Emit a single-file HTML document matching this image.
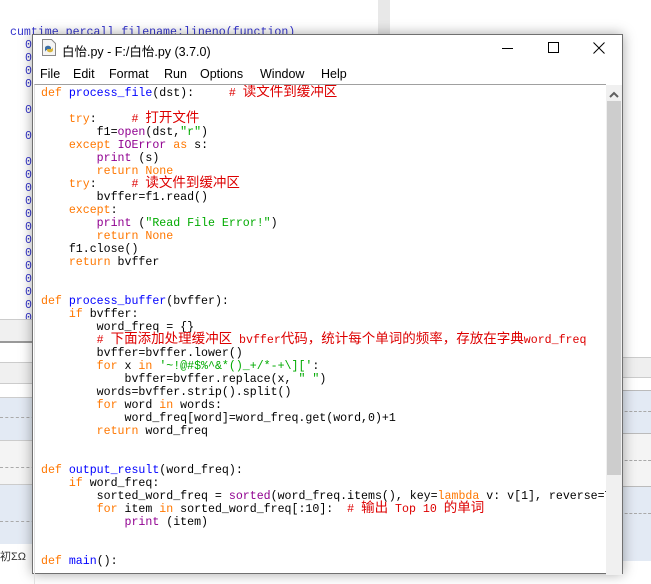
<!DOCTYPE html>
<html><head><meta charset="utf-8"><style>
*{margin:0;padding:0;box-sizing:border-box}
body{width:651px;height:561px;overflow:hidden;position:relative;background:#fff;font-family:"Liberation Sans","Noto Sans CJK SC",sans-serif}
.abs{position:absolute}
.bg0{font-family:"Liberation Mono",monospace;font-size:11.6px;color:#3333cc;line-height:13px}
#win{position:absolute;left:32px;top:34px;width:591px;height:540px;background:#fff;border:1px solid #707070;box-shadow:0 0 12px rgba(0,0,0,.35)}
.menu span{position:absolute;top:32px;font-size:12.5px;color:#000}
#txt{position:absolute;left:1px;top:49px;width:572px;height:500px;border-top:1px solid #a0a0a0;border-left:1px solid #e0e0e0;overflow:hidden}
pre{position:absolute;left:6px;top:2px;font-family:"Liberation Mono",monospace;font-size:11.6px;line-height:13px;color:#000;white-space:pre}
.c{font-size:13.5px;line-height:0;font-family:"Noto Sans CJK SC",sans-serif}
.k{color:#ff7700}.f{color:#0000ff}.r{color:#dd0000}.s{color:#00aa00}.b{color:#900090}
</style></head><body>
<div class="abs" style="left:378px;top:0;width:12px;height:34px;background:#e8e8e8"></div>
<div class="abs bg0" style="left:10px;top:26px">cumtime  percall filename:lineno(function)</div>
<div class="abs bg0" style="left:25px;top:39px">0.<br>0.<br>0.<br>0.<br><br>0.<br><br>0.<br><br>0.<br>0.<br>0.<br>0.<br>0.<br>0.<br>0.<br>0.<br>0.<br>0.<br>0.<br>0.<br>0.</div>
<div class="abs" style="left:0;top:319px;width:40px;height:1px;background:#ccc"></div>
<div class="abs" style="left:0;top:320px;width:40px;height:22px;background:#f0f0f0"></div>
<div class="abs" style="left:0;top:341px;width:40px;height:2px;background:#999"></div>
<div class="abs" style="left:0;top:362px;width:40px;height:22px;background:#f0f0f0;border-top:1px solid #ccc;border-bottom:1px solid #ccc"></div>
<div class="abs" style="left:0;top:397px;width:40px;height:43px;background:#e3eaf4;border-top:1px solid #ccc"></div>
<div class="abs" style="left:0;top:417px;width:40px;border-top:1px dashed #aaa"></div>
<div class="abs" style="left:0;top:440px;width:40px;height:44px;background:#f4f4f4;border-top:1px solid #ccc"></div>
<div class="abs" style="left:0;top:467px;width:40px;border-top:1px dashed #aaa"></div>
<div class="abs" style="left:0;top:484px;width:40px;height:60px;background:#e3eaf4;border-top:1px solid #ccc"></div>
<div class="abs" style="left:0;top:521px;width:40px;border-top:1px dashed #aaa"></div>
<div class="abs" style="left:0;top:548px;font-size:11px;color:#333">初ΣΩ</div>
<div class="abs" style="left:620px;top:357px;width:31px;height:21px;background:#efefef;border-top:1px solid #ccc;border-bottom:1px solid #ccc"></div>
<div class="abs" style="left:620px;top:390px;width:31px;height:43px;background:#e3eaf4;border-top:1px solid #bbb"></div>
<div class="abs" style="left:620px;top:411px;width:31px;border-top:1px dashed #aaa"></div>
<div class="abs" style="left:620px;top:433px;width:31px;height:53px;background:#f4f4f4;border-top:1px solid #bbb"></div>
<div class="abs" style="left:620px;top:460px;width:31px;border-top:1px dashed #aaa"></div>
<div class="abs" style="left:620px;top:486px;width:31px;height:75px;background:#e3eaf4;border-top:1px solid #bbb"></div>
<div class="abs" style="left:620px;top:513px;width:31px;border-top:1px dashed #aaa"></div>
<div id="win">
<svg class="abs" style="left:8px;top:4px" width="16" height="17" viewBox="0 0 16 17"><path d="M1.5 .5h9l4 4v12h-13z" fill="#f4f4f4" stroke="#888"/><path d="M4 9c0-3 6-3 6 0v2H6c-1 0-2 1-2 2z" fill="#3b6ea5"/><path d="M12 11c0 3-6 3-6 0v-1h4c1 0 2-1 2-2z" fill="#d8b53a"/></svg>
<div class="abs" style="left:29px;top:6px;font-size:12.5px;color:#000">白怡.py - F:/白怡.py (3.7.0)</div>
<div class="abs" style="left:469px;top:13px;width:11px;height:1px;background:#000"></div>
<div class="abs" style="left:515px;top:7px;width:11px;height:11px;border:1px solid #000"></div>
<svg class="abs" style="left:560px;top:7px" width="12" height="12"><path d="M.5 .5l11 11M11.5 .5l-11 11" stroke="#000"/></svg>
<div class="menu"><span style="left:7px">File</span><span style="left:40px">Edit</span><span style="left:76px">Format</span><span style="left:131px">Run</span><span style="left:167px">Options</span><span style="left:227px">Window</span><span style="left:288px">Help</span></div>
<div id="txt"><pre><span class="k">def</span> <span class="f">process_file</span>(dst):     <span class="r"># <span class="c">读文件到缓冲区</span></span>

    <span class="k">try</span>:     <span class="r"># <span class="c">打开文件</span></span>
        f1=<span class="b">open</span>(dst,<span class="s">"r"</span>)
    <span class="k">except</span> <span class="b">IOError</span> <span class="k">as</span> s:
        <span class="b">print</span> (s)
        <span class="k">return</span> <span class="k">None</span>
    <span class="k">try</span>:     <span class="r"># <span class="c">读文件到缓冲区</span></span>
        bvffer=f1.read()
    <span class="k">except</span>:
        <span class="b">print</span> (<span class="s">"Read File Error!"</span>)
        <span class="k">return</span> <span class="k">None</span>
    f1.close()
    <span class="k">return</span> bvffer


<span class="k">def</span> <span class="f">process_buffer</span>(bvffer):
    <span class="k">if</span> bvffer:
        word_freq = {}
        <span class="r"># <span class="c">下面添加处理缓冲区</span> bvffer<span class="c">代码，统计每个单词的频率，存放在字典</span>word_freq</span>
        bvffer=bvffer.lower()
        <span class="k">for</span> x <span class="k">in</span> <span class="s">'~!@#$%^&amp;*()_+/*-+\]['</span>:
            bvffer=bvffer.replace(x, <span class="s">" "</span>)
        words=bvffer.strip().split()
        <span class="k">for</span> word <span class="k">in</span> words:
            word_freq[word]=word_freq.get(word,0)+1
        <span class="k">return</span> word_freq


<span class="k">def</span> <span class="f">output_result</span>(word_freq):
    <span class="k">if</span> word_freq:
        sorted_word_freq = <span class="b">sorted</span>(word_freq.items(), key=<span class="k">lambda</span> v: v[1], reverse=True)
        <span class="k">for</span> item <span class="k">in</span> sorted_word_freq[:10]:  <span class="r"># <span class="c">输出</span> Top 10 <span class="c">的单词</span></span>
            <span class="b">print</span> (item)


<span class="k">def</span> <span class="f">main</span>():</pre></div>
<div class="abs" style="left:573px;top:50px;width:16px;height:490px;background:#f0f0f0"></div>
<svg class="abs" style="left:576px;top:56px" width="10" height="7"><path d="M1 6l4-4 4 4" stroke="#606060" stroke-width="2" fill="none"/></svg>
<div class="abs" style="left:574px;top:66px;width:14px;height:374px;background:#cdcdcd"></div>
</div>
</body></html>
